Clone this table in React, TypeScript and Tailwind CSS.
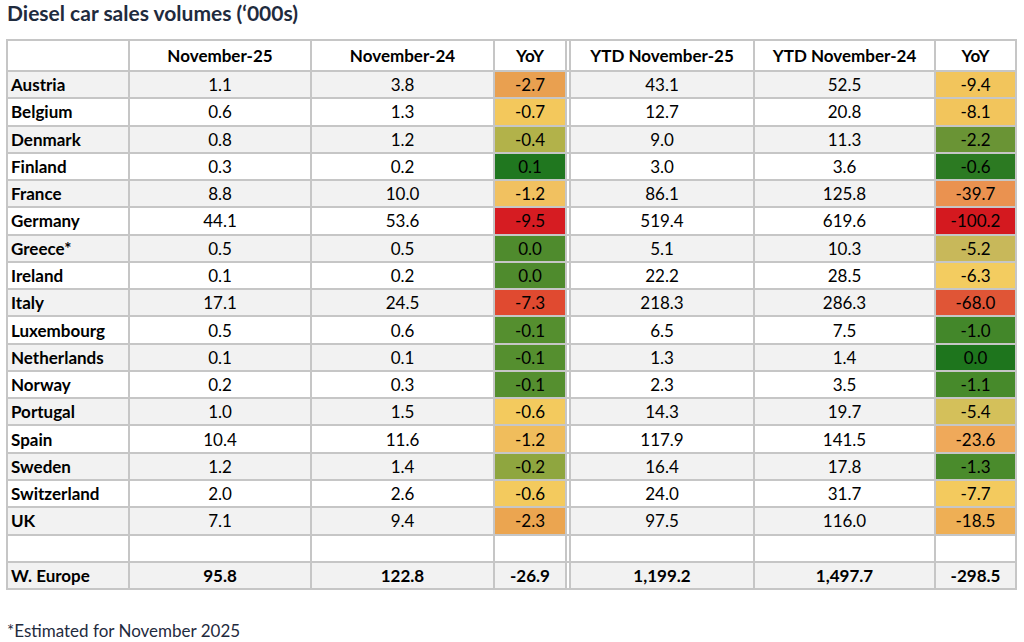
const rows: [string, string, string, string, string, string, string, string, string][] = [
  ["Austria", "1.1", "3.8", "-2.7", "bg-[#e9a050]", "43.1", "52.5", "-9.4", "bg-[#f2c55c]"],
  ["Belgium", "0.6", "1.3", "-0.7", "bg-[#f3c85c]", "12.7", "20.8", "-8.1", "bg-[#f2c55c]"],
  ["Denmark", "0.8", "1.2", "-0.4", "bg-[#b2b24a]", "9.0", "11.3", "-2.2", "bg-[#6a9435]"],
  ["Finland", "0.3", "0.2", "0.1", "bg-[#20771f]", "3.0", "3.6", "-0.6", "bg-[#2c7a22]"],
  ["France", "8.8", "10.0", "-1.2", "bg-[#f1c160]", "86.1", "125.8", "-39.7", "bg-[#ea9250]"],
  ["Germany", "44.1", "53.6", "-9.5", "bg-[#d61c22]", "519.4", "619.6", "-100.2", "bg-[#d4191f]"],
  ["Greece*", "0.5", "0.5", "0.0", "bg-[#4f8b2d]", "5.1", "10.3", "-5.2", "bg-[#c8b85a]"],
  ["Ireland", "0.1", "0.2", "0.0", "bg-[#4f8b2d]", "22.2", "28.5", "-6.3", "bg-[#f3cc60]"],
  ["Italy", "17.1", "24.5", "-7.3", "bg-[#e04a30]", "218.3", "286.3", "-68.0", "bg-[#e05536]"],
  ["Luxembourg", "0.5", "0.6", "-0.1", "bg-[#558f2f]", "6.5", "7.5", "-1.0", "bg-[#43872a]"],
  ["Netherlands", "0.1", "0.1", "-0.1", "bg-[#558f2f]", "1.3", "1.4", "0.0", "bg-[#1e751d]"],
  ["Norway", "0.2", "0.3", "-0.1", "bg-[#558f2f]", "2.3", "3.5", "-1.1", "bg-[#478a2b]"],
  ["Portugal", "1.0", "1.5", "-0.6", "bg-[#f3ca5e]", "14.3", "19.7", "-5.4", "bg-[#d4c05a]"],
  ["Spain", "10.4", "11.6", "-1.2", "bg-[#f0bd5c]", "117.9", "141.5", "-23.6", "bg-[#efa95a]"],
  ["Sweden", "1.2", "1.4", "-0.2", "bg-[#8fa63f]", "16.4", "17.8", "-1.3", "bg-[#4a8b2c]"],
  ["Switzerland", "2.0", "2.6", "-0.6", "bg-[#f3ca5e]", "24.0", "31.7", "-7.7", "bg-[#f3ca5e]"],
  ["UK", "7.1", "9.4", "-2.3", "bg-[#eba550]", "97.5", "116.0", "-18.5", "bg-[#eeaf55]"],
];

const cell = "flex items-center justify-center";

export default function App() {
  return (
    <div
      className="w-[1024px] h-[642px] bg-white text-black overflow-hidden"
      style={{ fontFamily: "Lato, 'Open Sans', sans-serif" }}
    >
      <div className="pl-[7px] h-[39px] text-[21px] font-bold text-[#1f2b3e] leading-[26px]">
        Diesel car sales volumes (‘000s)
      </div>

      <div className="ml-[6px] w-[1011px] bg-[#c6c6c6] p-[2px] grid grid-cols-[120px_180px_181px_70px_2px_182px_179px_79px] gap-[2px] grid-rows-[29px_repeat(19,25.27px)] text-[17px] leading-none">
        <div className="bg-white" />
        <div className={`${cell} bg-white font-bold`}>November-25</div>
        <div className={`${cell} bg-white font-bold`}>November-24</div>
        <div className={`${cell} bg-white font-bold`}>YoY</div>
        <div className="bg-white" />
        <div className={`${cell} bg-white font-bold`}>YTD November-25</div>
        <div className={`${cell} bg-white font-bold`}>YTD November-24</div>
        <div className={`${cell} bg-white font-bold`}>YoY</div>

        {rows.map((r, i) => {
          const bg = i % 2 === 0 ? "bg-[#f2f2f2]" : "bg-white";
          return [
            <div key={r[0] + "a"} className={`${bg} flex items-center pl-[3px] font-bold`}>{r[0]}</div>,
            <div key={r[0] + "b"} className={`${cell} ${bg}`}>{r[1]}</div>,
            <div key={r[0] + "c"} className={`${cell} ${bg}`}>{r[2]}</div>,
            <div key={r[0] + "d"} className={`${cell} ${r[4]}`}>{r[3]}</div>,
            <div key={r[0] + "e"} className="bg-white" />,
            <div key={r[0] + "f"} className={`${cell} ${bg}`}>{r[5]}</div>,
            <div key={r[0] + "g"} className={`${cell} ${bg}`}>{r[6]}</div>,
            <div key={r[0] + "h"} className={`${cell} ${r[8]}`}>{r[7]}</div>,
          ];
        })}

        <div className="bg-white" />
        <div className="bg-white" />
        <div className="bg-white" />
        <div className="bg-white" />
        <div className="bg-white" />
        <div className="bg-white" />
        <div className="bg-white" />
        <div className="bg-white" />

        <div className="bg-[#f2f2f2] flex items-center pl-[3px] font-bold">W. Europe</div>
        <div className={`${cell} bg-[#f2f2f2] font-bold`}>95.8</div>
        <div className={`${cell} bg-[#f2f2f2] font-bold`}>122.8</div>
        <div className={`${cell} bg-[#f2f2f2] font-bold`}>-26.9</div>
        <div className="bg-white" />
        <div className={`${cell} bg-[#f2f2f2] font-bold`}>1,199.2</div>
        <div className={`${cell} bg-[#f2f2f2] font-bold`}>1,497.7</div>
        <div className={`${cell} bg-[#f2f2f2] font-bold`}>-298.5</div>
      </div>

      <div className="pl-[7px] pt-[28px] text-[17px] text-[#1f2b3e]">*Estimated for November 2025</div>
    </div>
  );
}
